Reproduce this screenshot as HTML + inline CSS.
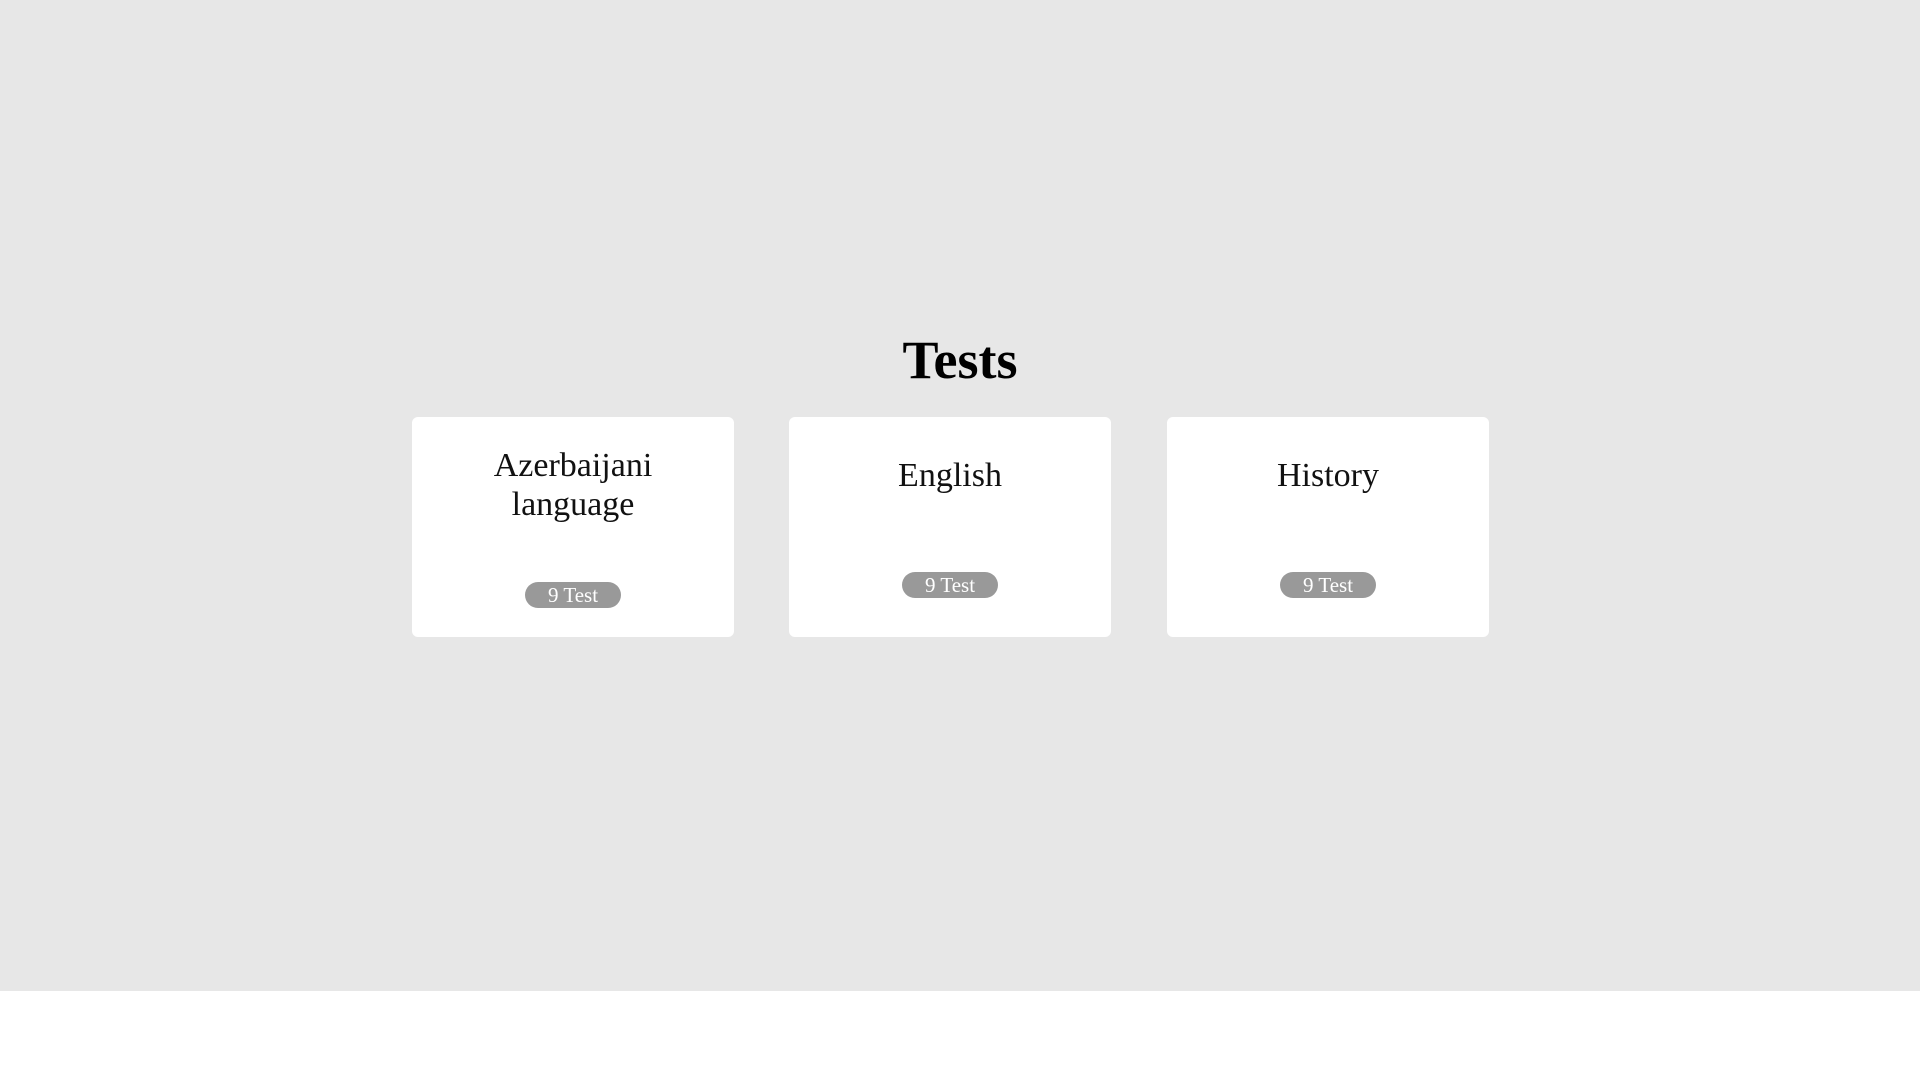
<!DOCTYPE html>
<html><head><style>
html,body{margin:0;padding:0;width:1920px;height:1080px;background:#fff;overflow:hidden;font-family:"Liberation Serif",serif;}
.bg{position:absolute;left:0;top:0;width:1920px;height:991px;background:#e7e7e7;}
h1{position:absolute;left:0;width:1920px;top:327px;margin:0;text-align:center;font-size:54px;line-height:66px;font-weight:bold;color:#000;}
.card{position:absolute;top:417px;width:322px;height:220px;background:#fff;border-radius:6px;}
.t{position:absolute;left:0;width:100%;text-align:center;font-size:34px;line-height:39px;color:#111;}
.b{position:absolute;left:50%;margin-left:-48px;width:96px;height:26px;border-radius:13px;background:#999;color:#fff;text-align:center;font-size:21px;line-height:26px;}
</style></head><body>
<div class="bg"></div>
<h1>Tests</h1>
<div class="card" style="left:412px"><div class="t" style="top:29px">Azerbaijani<br>language</div><div class="b" style="top:165px">9 Test</div></div>
<div class="card" style="left:789px"><div class="t" style="top:39px">English</div><div class="b" style="top:155px">9 Test</div></div>
<div class="card" style="left:1167px"><div class="t" style="top:39px">History</div><div class="b" style="top:155px">9 Test</div></div>
</body></html>
